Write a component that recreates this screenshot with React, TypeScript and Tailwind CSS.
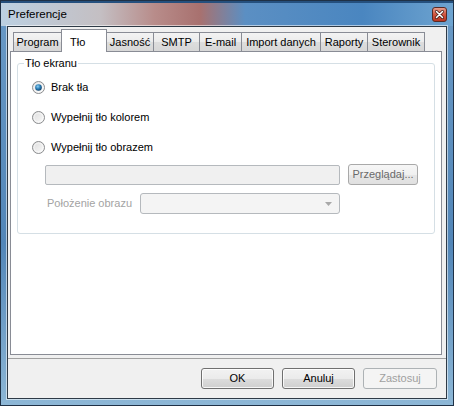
import { FC } from "react";

const font = { fontFamily: '"Liberation Sans", Arial, sans-serif' };

const tabs = [
  { label: "Program", w: "w-[49px]" },
  { label: "Tło", w: "w-[46px]", active: true },
  { label: "Jasność", w: "w-[48px]" },
  { label: "SMTP", w: "w-[47px]" },
  { label: "E-mail", w: "w-[43px]" },
  { label: "Import danych", w: "w-[80px]" },
  { label: "Raporty", w: "w-[48px]" },
  { label: "Sterownik", w: "w-[58px]" },
];

const Radio: FC<{ checked?: boolean }> = ({ checked }) => (
  <svg width="13" height="13" viewBox="0 0 13 13" className="shrink-0">
    <defs>
      <linearGradient id="rbFill" x1="0" y1="0" x2="1" y2="1">
        <stop offset="0" stopColor="#dcdcdc" />
        <stop offset="1" stopColor="#fbfbfb" />
      </linearGradient>
      <radialGradient id="rbDot" cx="40%" cy="35%" r="70%">
        <stop offset="0" stopColor="#8fd0f2" />
        <stop offset="0.5" stopColor="#2b7fb8" />
        <stop offset="1" stopColor="#0e3b62" />
      </radialGradient>
    </defs>
    <circle cx="6.5" cy="6.5" r="6" fill="url(#rbFill)" stroke="#8a8c8e" strokeWidth="1" />
    <circle cx="6.5" cy="6.5" r="4.5" fill="none" stroke="#ffffff" strokeWidth="0.8" opacity="0.7" />
    {checked && <circle cx="6.5" cy="6.5" r="3.3" fill="url(#rbDot)" />}
  </svg>
);

const winBtn =
  "h-[21px] rounded-[3px] border border-[#707070] bg-[linear-gradient(180deg,#f2f2f2_0%,#ebebeb_50%,#dddddd_50%,#cfcfcf_100%)] shadow-[inset_0_0_0_1px_rgba(255,255,255,0.8)] text-[11px] text-black flex items-center justify-center";

export default function App() {
  return (
    <div className="w-[454px] h-[406px] flex flex-col border border-[#1f3146] bg-[linear-gradient(180deg,#6a9ac6_0%,#5286b8_60%,#8db7d6_100%)]" style={font}>
      {/* title bar */}
      <div className="h-[25px] shrink-0 flex items-center justify-between pl-[7px] pr-[6px] border-t-[2px] border-[#25507e] bg-[linear-gradient(90deg,#bcd0e1_0%,#c4bfc3_22%,#b88c8a_34%,#a8716f_44%,#5b8fc3_54%,#4a86c0_80%,#6ea4d0_100%)]">
        <span className="text-[11.5px] text-black">Preferencje</span>
        <svg width="15" height="15" viewBox="0 0 15 15" className="mb-[1px]">
          <defs>
            <linearGradient id="closeBg" x1="0" y1="0" x2="0" y2="1">
              <stop offset="0" stopColor="#e8a493" />
              <stop offset="0.5" stopColor="#d0553f" />
              <stop offset="1" stopColor="#b8341f" />
            </linearGradient>
          </defs>
          <rect x="0.5" y="0.5" width="14" height="14" rx="2.5" fill="url(#closeBg)" stroke="#5a2a24" />
          <path d="M4.5 4.5 L10.5 10.5 M10.5 4.5 L4.5 10.5" stroke="#3b1712" strokeWidth="3" strokeLinecap="round" />
          <path d="M4.5 4.5 L10.5 10.5 M10.5 4.5 L4.5 10.5" stroke="#ffffff" strokeWidth="1.6" strokeLinecap="round" />
        </svg>
      </div>

      {/* client area */}
      <div className="flex-1 px-[6px] pb-[6px]">
        <div className="h-full border border-[#2e3a46] bg-[#f0f0f0] flex flex-col shadow-[0_0_0_1px_rgba(255,255,255,0.55)]">
          {/* tab strip */}
          <div className="h-[24px] flex items-end pl-[5px] shrink-0">
            {tabs.map((t, i) =>
              t.active ? (
                <div
                  key={t.label}
                  className={`${t.w} h-[23px] -mb-px relative z-10 ${i > 0 ? "-ml-px" : ""} border border-b-0 border-[#898c95] bg-white text-[11px] text-black flex items-start justify-start pl-[8px] pt-[4px]`}
                >
                  {t.label}
                </div>
              ) : (
                <div
                  key={t.label}
                  className={`${t.w} h-[19px] ${i > 0 ? "-ml-px" : ""} border border-b-0 border-[#898c95] bg-[linear-gradient(180deg,#f3f3f3_0%,#ebebeb_50%,#dddddd_50%,#d7d7d7_100%)] text-[11px] text-black flex items-center justify-center`}
                >
                  {t.label}
                </div>
              )
            )}
          </div>

          {/* tab panel */}
          <div className="ml-[2px] w-[432px] h-[304px] shrink-0 border border-[#898c95] bg-white pt-[11px] pl-[6px]">
            <div className="relative w-[418px] h-[171px] border border-[#d5dfe5] rounded-[3px]">
              <span className="absolute -top-[8px] left-[6px] bg-white px-[1px] text-[11px] text-black leading-[14px]">
                Tło ekranu
              </span>
              <div className="pt-[17px] pl-[14px] flex flex-col gap-[17px]">
                <div className="h-[13px] flex items-center gap-[6px] text-[11px] text-black">
                  <Radio checked />
                  <span>Brak tła</span>
                </div>
                <div className="h-[13px] flex items-center gap-[6px] text-[11px] text-black">
                  <Radio />
                  <span>Wypełnij tło kolorem</span>
                </div>
                <div className="h-[13px] flex items-center gap-[6px] text-[11px] text-black">
                  <Radio />
                  <span>Wypełnij tło obrazem</span>
                </div>
              </div>

              <div className="mt-[10px] pl-[27px] h-[21px] flex items-center gap-[8px]">
                <div className="w-[295px] h-[20px] border border-[#b5b9bd] rounded-[2px] bg-[#f0f0f0]" />
                <div className="w-[70px] h-[21px] rounded-[3px] border border-[#a9a9a9] bg-[linear-gradient(180deg,#f6f6f6_0%,#f0f0f0_50%,#e6e6e6_50%,#e0e0e0_100%)] text-[11px] text-[#6a6a6a] flex items-center justify-center">
                  Przeglądaj...
                </div>
              </div>

              <div className="mt-[8px] pl-[27px] h-[21px] flex items-center">
                <span className="w-[95px] pl-[2px] text-[11px] text-[#a3a3a3]">Położenie obrazu</span>
                <div className="w-[200px] h-[21px] border border-[#b5b9bd] rounded-[3px] bg-[#f4f4f4] flex items-center justify-end pr-[7px]">
                  <svg width="7" height="4" viewBox="0 0 7 4">
                    <path d="M0 0 H7 L3.5 4 Z" fill="#a8a8a8" />
                  </svg>
                </div>
              </div>
            </div>
          </div>

          {/* buttons */}
          <div className="mt-[3px] flex-1 border-t border-[#a0a0a0] flex items-start justify-end pt-[9px] pr-[9px] gap-[8px]">
            <div className={`${winBtn} w-[73px]`}>OK</div>
            <div className={`${winBtn} w-[73px]`}>Anuluj</div>
            <div className="w-[74px] h-[21px] rounded-[3px] border border-[#adb2b5] bg-[#f4f4f4] text-[11px] text-[#a0a0a0] flex items-center justify-center">
              Zastosuj
            </div>
          </div>
        </div>
      </div>
    </div>
  );
}
